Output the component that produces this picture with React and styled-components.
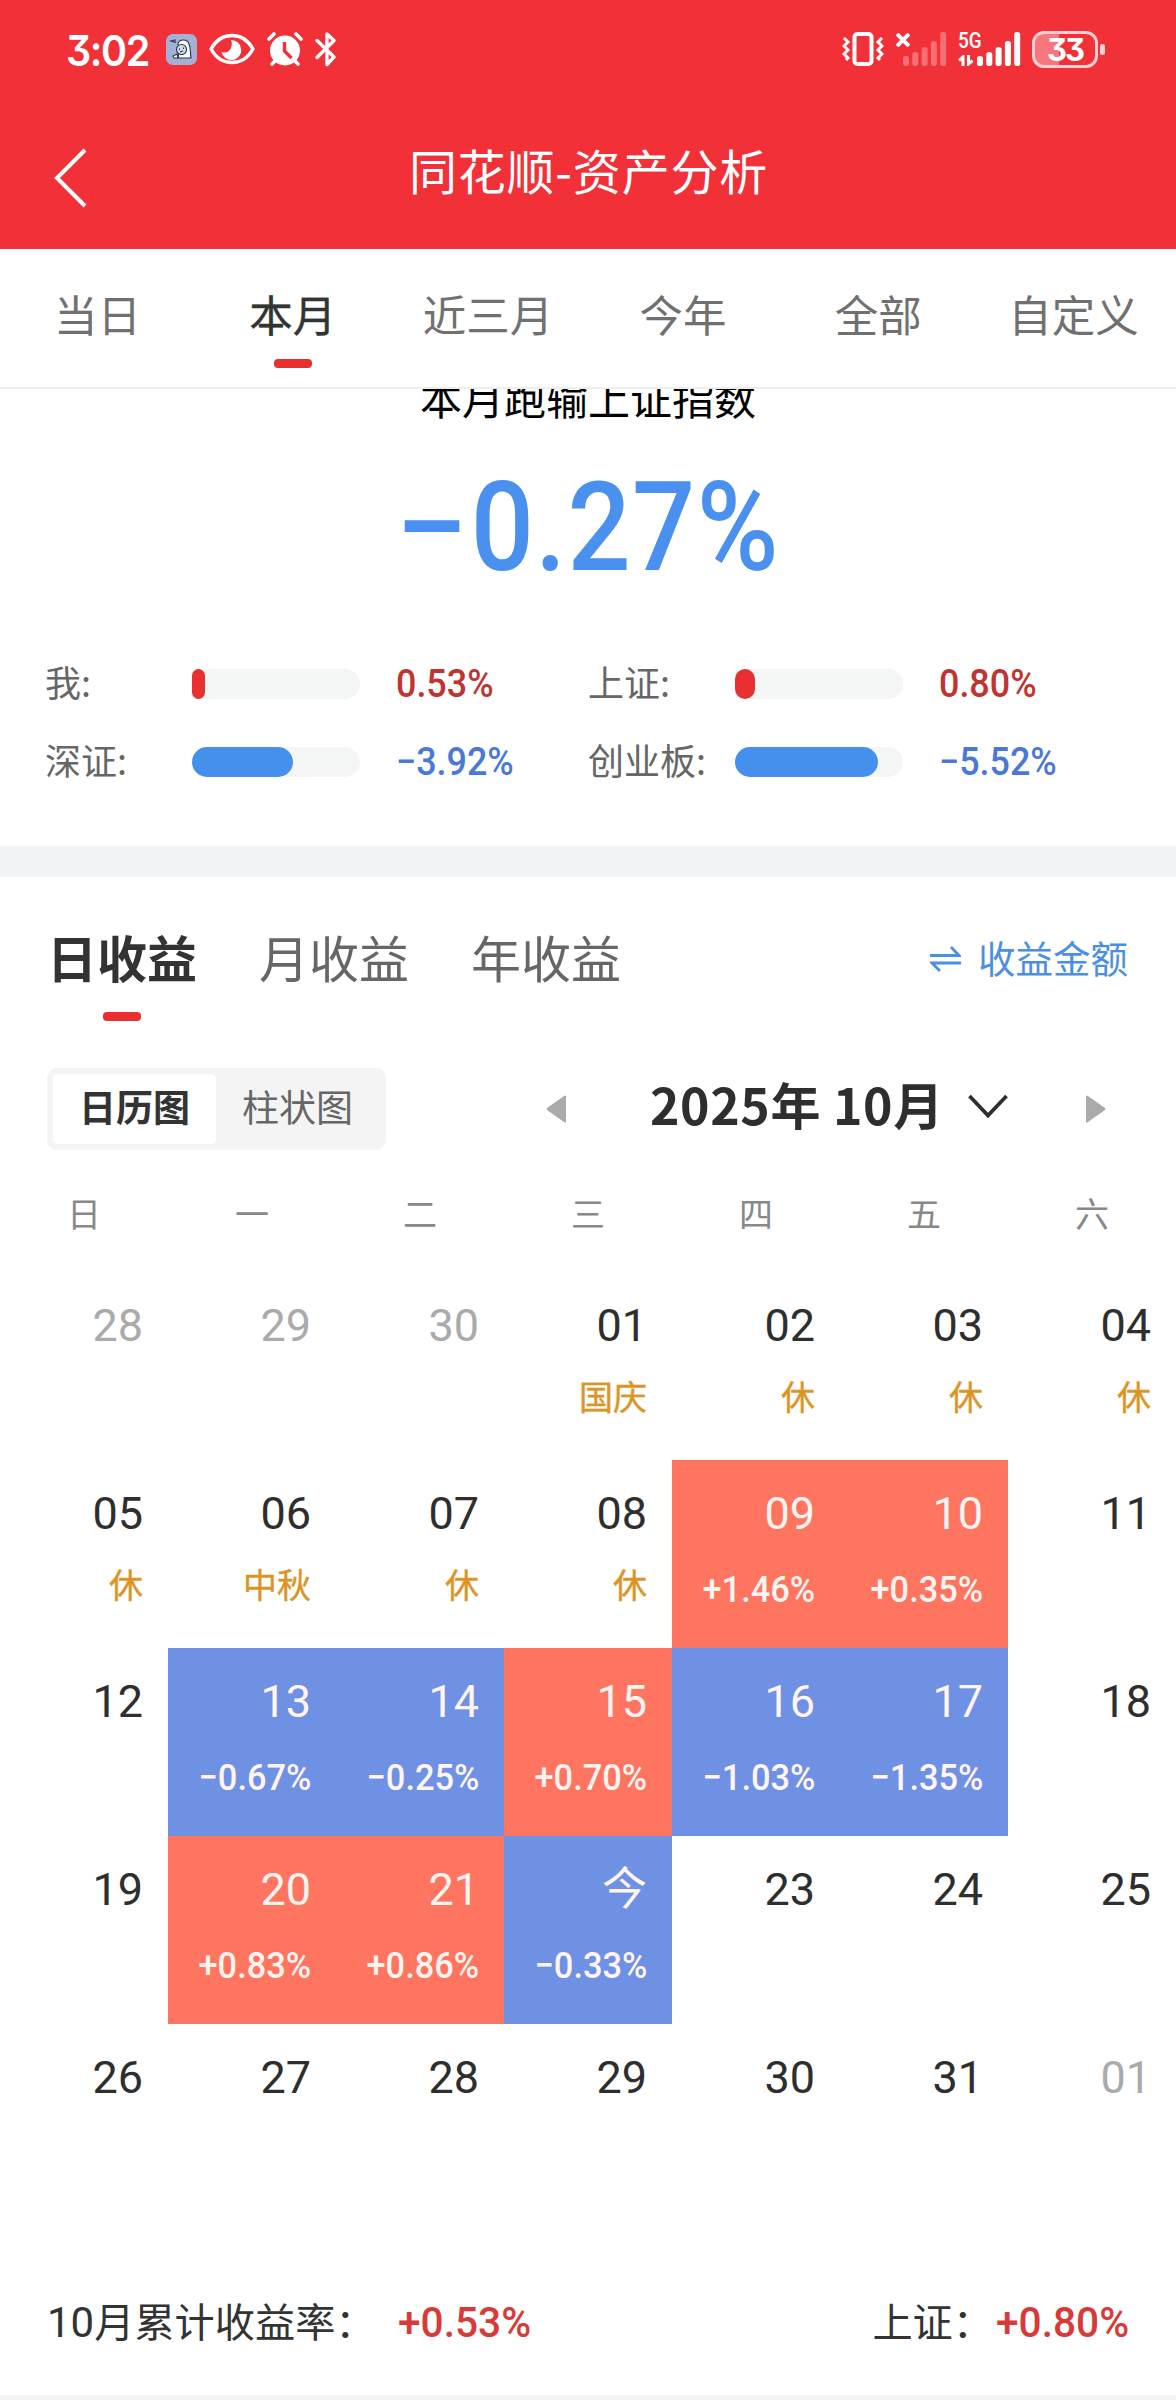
import React from "react";
import styled, { createGlobalStyle } from "styled-components";

const periods = ["当日", "本月", "近三月", "今年", "全部", "自定义"];

const indexes = [
  { label: "我:", value: "0.53%", size: 13, up: true },
  { label: "上证:", value: "0.80%", size: 20, up: true },
  { label: "深证:", value: "−3.92%", size: 101 },
  { label: "创业板:", value: "−5.52%", size: 143 },
];

const weekDays = ["日", "一", "二", "三", "四", "五", "六"];

const days = [
  { day: "28", out: true },
  { day: "29", out: true },
  { day: "30", out: true },
  { day: "01", rest: "国庆" },
  { day: "02", rest: "休" },
  { day: "03", rest: "休" },
  { day: "04", rest: "休" },
  { day: "05", rest: "休" },
  { day: "06", rest: "中秋" },
  { day: "07", rest: "休" },
  { day: "08", rest: "休" },
  { day: "09", rate: "+1.46%" },
  { day: "10", rate: "+0.35%" },
  { day: "11" },
  { day: "12" },
  { day: "13", rate: "−0.67%" },
  { day: "14", rate: "−0.25%" },
  { day: "15", rate: "+0.70%" },
  { day: "16", rate: "−1.03%" },
  { day: "17", rate: "−1.35%" },
  { day: "18" },
  { day: "19" },
  { day: "20", rate: "+0.83%" },
  { day: "21", rate: "+0.86%" },
  { day: "今", rate: "−0.33%" },
  { day: "23" },
  { day: "24" },
  { day: "25" },
  { day: "26" },
  { day: "27" },
  { day: "28" },
  { day: "29" },
  { day: "30" },
  { day: "31" },
  { day: "01", out: true },
];

const barTops = [24, 20, 15, 9, 0];

function SignalBars({ faded }) {
  return (
    <svg width="44" height="34" viewBox="0 0 44 34" fill="#fff" opacity={faded ? 0.3 : 1}>
      {barTops.map((top, i) => (
        <rect key={top} x={i * 9.3} y={top} width="6" height={34 - top} rx="2.8" />
      ))}
    </svg>
  );
}

function StatusIcons() {
  return (
    <>
      <AppBadge>
        <svg width="31" height="31" viewBox="0 0 31 31" fill="#fff" stroke="#28324a" strokeWidth="1.1">
          <path d="M12 11c0-6 9-7 11-1 2 5 1 9 2 14H12l1-6" />
          <circle cx="15.500" cy="15.500" r="5" fill="#d5dced" />
          <path d="M13.500 14.500v1.500M17.500 13.500v1.500M14 18l3-1M7 22l4-2 1 4H8zM5 7l4-1v2.500z" />
        </svg>
      </AppBadge>
      <Eye width="46" height="32" viewBox="0 0 46 32">
        <path d="M2 16C12-2 34-2 44 16 34 34 12 34 2 16z" fill="none" stroke="#fff" strokeWidth="3.4" strokeLinejoin="round" />
        <path d="M22 7a10 10 0 1 1-9.500 12q6 2 9-3 2.500-5 .5-9z" fill="#fff" />
      </Eye>
      <Alarm width="36" height="35" viewBox="0 0 36 35">
        <circle cx="18" cy="18.500" r="15" fill="#fff" />
        <path d="M2 7l5-5M34 7l-5-5M5 32l4-4M31 32l-4-4" stroke="#fff" strokeWidth="3.600" strokeLinecap="round" />
        <path d="M17.500 10v9l7 7" fill="none" stroke="#f23038" strokeWidth="3.400" />
      </Alarm>
      <Bluetooth width="22" height="36" viewBox="0 0 22 36" fill="none" stroke="#fff" strokeWidth="3.400" strokeLinejoin="round" strokeLinecap="round">
        <path d="M2 9.500l17 16.500-7 7.500V3l7 6.500L2 26.500" />
      </Bluetooth>
    </>
  );
}

export default function App() {
  return (
    <Page>
      <GlobalStyle />
      <StatusBar>
        <Clock>3:02</Clock>
        <StatusIcons />
        <StatusRight>
          <Vibrate width="42" height="34" viewBox="0 0 42 34" fill="none" stroke="#fff">
            <rect x="12.500" y="2" width="17" height="30" rx="3" strokeWidth="4" />
            <path d="M2 6l4 4-4 4 4 4-4 4 4 4-2 2M40 6l-4 4 4 4-4 4 4 4-4 4 2 2" strokeWidth="3" />
          </Vibrate>
          <Sim>
            <NoSim width="14" height="14" viewBox="0 0 14 14" stroke="#fff" strokeWidth="4">
              <path d="M1 1l12 12M13 1L1 13" />
            </NoSim>
            <SignalBars faded />
          </Sim>
          <Sim>
            <Network>
              <span>5G</span>
              <svg width="16" height="11" viewBox="0 0 16 11" fill="none" stroke="#fff" strokeWidth="3">
                <path d="M5 11V2L1 5.500M10.500 0v9l4-3.500" />
              </svg>
            </Network>
            <SignalBars />
          </Sim>
          <Battery>33</Battery>
          <BatteryTip />
        </StatusRight>
      </StatusBar>

      <NavBar>
        <svg width="33" height="60" viewBox="0 0 33 60" fill="none" stroke="#fff" strokeWidth="4">
          <path d="M31 2L3 30l28 28" />
        </svg>
        <h1>同花顺-资产分析</h1>
      </NavBar>

      <Periods>
        {periods.map((name, i) => (
          <Period key={name} $active={i === 1}>{name}</Period>
        ))}
      </Periods>

      <Summary>
        <SummaryTitle>本月跑输上证指数</SummaryTitle>
        <BigRate><Sign>−</Sign>0.27%</BigRate>
        <IndexGrid>
          {indexes.map((item) => (
            <IndexRow key={item.label}>
              <IndexLabel>{item.label}</IndexLabel>
              <Track>
                <Fill $up={item.up} style={{ width: item.size }} />
              </Track>
              <IndexValue $up={item.up}>{item.value}</IndexValue>
            </IndexRow>
          ))}
        </IndexGrid>
      </Summary>

      <ProfitTabs>
        <ProfitTab $active>日收益</ProfitTab>
        <ProfitTab>月收益</ProfitTab>
        <ProfitTab>年收益</ProfitTab>
        <Switcher>
          <svg width="31" height="26" viewBox="0 0 31 26" fill="none" stroke="#4a90e2" strokeWidth="2.800">
            <path d="M0 9.500h29L21 1M31 17H2l8 8" />
          </svg>
          收益金额
        </Switcher>
      </ProfitTabs>

      <Controls>
        <Segment>
          <SegmentItem $active>日历图</SegmentItem>
          <SegmentItem>柱状图</SegmentItem>
        </Segment>
        <PrevMonth width="21" height="28" viewBox="0 0 21 28" fill="#aaa">
          <path d="M20 1v26q-1 1-2 0L1 15q-1-1 0-2L18 1q1-1 2 0z" />
        </PrevMonth>
        <Month>2025年 10月</Month>
        <MonthArrow width="40" height="25" viewBox="0 0 40 25" fill="none" stroke="#2e2e2e" strokeWidth="3.800">
          <path d="M1.500 2L20 21.500 38.500 2" />
        </MonthArrow>
        <NextMonth width="21" height="28" viewBox="0 0 21 28" fill="#aaa">
          <path d="M1 1v26q1 1 2 0l17-12q1-1 0-2L3 1Q2 0 1 1z" />
        </NextMonth>
      </Controls>

      <WeekHeader>
        {weekDays.map((name) => (
          <span key={name}>{name}</span>
        ))}
      </WeekHeader>

      <Calendar>
        {days.map((item, i) => (
          <Day key={i} $rate={item.rate}>
            <DayNumber $out={item.out}>{item.day}</DayNumber>
            {item.rest && <Rest>{item.rest}</Rest>}
            {item.rate && <DayRate>{item.rate}</DayRate>}
          </Day>
        ))}
      </Calendar>

      <Totals>
        <TotalLabel><Digits>10</Digits>月累计收益率：</TotalLabel>
        <TotalRate $gap={22}>+0.53%</TotalRate>
        <TotalLabel $right>上证：</TotalLabel>
        <TotalRate $gap={3}>+0.80%</TotalRate>
      </Totals>
    </Page>
  );
}

const GlobalStyle = createGlobalStyle`
  * {
    box-sizing: border-box;
  }

  body {
    margin: 0;
    background: #f2f3f6;
    font-family: "Noto Sans CJK SC", sans-serif;
  }

  svg {
    display: block;
    flex-shrink: 0;
  }
`

const Page = styled.div`
  width: 1176px;
  height: 2400px;
  overflow: hidden;
  white-space: nowrap;
`

const StatusBar = styled.div`
  height: 98px;
  padding: 0 71px 0 66px;
  display: flex;
  align-items: center;
  background: #f23038;
  color: #ffffff;
`

const Clock = styled.div`
  width: 100px;
  font: 600 43px/98px Inter, sans-serif;
  font-feature-settings: "cv09";
  letter-spacing: -1.5px;
  transform: scaleX(0.92);
  transform-origin: left;
  margin-top: 2px;
`

const AppBadge = styled.div`
  width: 31px;
  height: 31px;
  border-radius: 7px;
  background: #a3b1d6;
`

const Eye = styled.svg`
  margin-left: 12px;
`

const Alarm = styled.svg`
  margin-left: 12px;
`

const Bluetooth = styled.svg`
  margin-left: 12px;
`

const StatusRight = styled.div`
  margin-left: auto;
  display: flex;
  align-items: center;
`

const Vibrate = styled.svg`
  margin-right: 12px;
`

const Sim = styled.div`
  height: 34px;
  display: flex;
  margin-right: 11px;
`

const NoSim = styled.svg`
  margin: 1px -7px 0 0;
`

const Network = styled.div`
  width: 19px;
  display: flex;
  flex-direction: column;
  justify-content: space-between;

  span {
    font: 500 22px/18px Roboto, sans-serif;
    transform: scaleX(0.86);
    transform-origin: left;
  }
`

const Battery = styled.div`
  width: 66px;
  height: 37px;
  border: 3px solid #ffd0d2;
  border-radius: 12px;
  background: linear-gradient(90deg, #f8777c 24px, transparent 24px);
  text-align: center;
  font: 700 31px/31px Inter, sans-serif;
  font-feature-settings: "cv09";
  letter-spacing: -2px;
`

const BatteryTip = styled.div`
  width: 5px;
  height: 11px;
  margin-left: 2px;
  margin-right: 0;
  border-radius: 2px;
  background: #ffd0d2;
`

const NavBar = styled.div`
  height: 151px;
  padding: 0 54px;
  display: flex;
  align-items: center;
  background: #f23038;
  color: #ffffff;

  svg {
    margin-top: 8px;
  }

  h1 {
    flex: 1;
    margin: 0 32px 10px 0;
    text-align: center;
    font-size: 48px;
    font-weight: 400;
    line-height: 60px;
    letter-spacing: 0.8px;
  }
`

const Periods = styled.div`
  height: 140px;
  padding-right: 5px;
  display: grid;
  grid-template-columns: repeat(6, 1fr);
  background: #ffffff;
  border-bottom: 2px solid #eeeeee;
`

const Period = styled.div`
  padding-top: 37px;
  display: flex;
  flex-direction: column;
  align-items: center;
  font-size: 43.5px;
  line-height: 56px;
  color: ${(props) => (props.$active ? "#333333" : "#707070")};
  -webkit-text-stroke: ${(props) => (props.$active ? "0.4px #333333" : "0")};

  &::after {
    content: "";
    display: ${(props) => (props.$active ? "block" : "none")};
    width: 38px;
    height: 9px;
    margin-top: 17px;
    border-radius: 4px;
    background: #e83030;
  }
`

const Summary = styled.div`
  height: 457px;
  overflow: hidden;
  background: #ffffff;
`

/* partly scrolled under the period tabs */
const SummaryTitle = styled.div`
  margin-top: -22px;
  text-align: center;
  font-size: 42px;
  line-height: 60px;
  color: #000000;
`

const BigRate = styled.div`
  margin-top: 41px;
  padding-left: 12px;
  text-align: center;
  font: 500 125px/120px Roboto, sans-serif;
  letter-spacing: 1.5px;
  color: #4a90ee;
  transform: scaleX(0.89);
`

const Sign = styled.span`
  display: inline-block;
  transform: scaleX(1.18);
  transform-origin: right;
`

const IndexGrid = styled.div`
  margin-top: 72px;
  padding-left: 45px;
  display: grid;
  grid-template-columns: 543px 1fr;
  row-gap: 30px;
`

const IndexRow = styled.div`
  height: 48px;
  display: flex;
  align-items: center;
`

const IndexLabel = styled.div`
  width: 147px;
  padding-bottom: 7px;
  font-size: 36px;
  line-height: 48px;
  color: #666666;
`

const Track = styled.div`
  width: 168px;
  height: 30px;
  border-radius: 15px;
  background: #f4f6f6;
`

const Fill = styled.div`
  height: 30px;
  border-radius: 15px;
  background: ${(props) => (props.$up ? "#e83030" : "#4690ed")};
`

const IndexValue = styled.div`
  margin-left: 36px;
  font: 500 39px/48px Roboto, sans-serif;
  color: ${(props) => (props.$up ? "#c0332e" : "#4a78d8")};
  transform: scaleX(0.92);
  transform-origin: left;
`

const ProfitTabs = styled.div`
  height: 174px;
  margin-top: 31px;
  padding: 48px 48px 0 47px;
  display: flex;
  background: #ffffff;
`

const ProfitTab = styled.div`
  margin-right: 62px;
  display: flex;
  flex-direction: column;
  align-items: center;
  font-size: 50px;
  font-weight: ${(props) => (props.$active ? 700 : 400)};
  line-height: 62px;
  color: ${(props) => (props.$active ? "#333333" : "#666666")};

  &::after {
    content: "";
    display: ${(props) => (props.$active ? "block" : "none")};
    width: 38px;
    height: 9px;
    margin-top: 25px;
    border-radius: 4px;
    background: #e83030;
  }
`

const Switcher = styled.div`
  height: 62px;
  margin-left: auto;
  display: flex;
  align-items: center;
  gap: 17px;
  font-size: 37.5px;
  color: #4a90e2;

  svg {
    margin-top: 6px;
  }
`

const Controls = styled.div`
  height: 116px;
  padding: 17px 70px 17px 47px;
  display: flex;
  align-items: center;
  background: #ffffff;
`

const Segment = styled.div`
  width: 339px;
  height: 82px;
  padding: 6px;
  display: flex;
  border-radius: 10px;
  background: #f4f4f4;
`

const SegmentItem = styled.div`
  width: 163px;
  height: 70px;
  border-radius: 5px;
  background: ${(props) => (props.$active ? "#ffffff" : "none")};
  text-align: center;
  font-size: 37px;
  font-weight: ${(props) => (props.$active ? 700 : 400)};
  line-height: 64px;
  color: ${(props) => (props.$active ? "#333333" : "#666666")};
`

const PrevMonth = styled.svg`
  margin-left: 160px;
`

const Month = styled.div`
  width: 318px;
  margin-left: 83px;
  padding-bottom: 12px;
  font-size: 50px;
  font-weight: 700;
  line-height: 60px;
  letter-spacing: 0.6px;
  color: #2e2e2e;
`

const MonthArrow = styled.svg`
  margin-top: -6px;
`

const NextMonth = styled.svg`
  margin-left: auto;
`

const WeekHeader = styled.div`
  height: 105px;
  padding-top: 22px;
  display: grid;
  grid-template-columns: repeat(7, 168px);
  background: #ffffff;
  text-align: center;
  font-size: 34px;
  line-height: 48px;
  color: #888888;
`

const Calendar = styled.div`
  display: grid;
  grid-template-columns: repeat(7, 168px);
  grid-auto-rows: 188px;
  background: #ffffff;
`

const cellColor = (rate) => {
  if (!rate) return "#ffffff"
  return rate[0] === "+" ? "#ff755f" : "#6e91e4"
}

const Day = styled.div`
  padding: 28px 25px 0 0;
  display: flex;
  flex-direction: column;
  align-items: flex-end;
  background: ${(props) => cellColor(props.$rate)};
  color: ${(props) => (props.$rate ? "#fff4f2" : "#2e2e2e")};
`

const DayNumber = styled.div`
  height: 52px;
  font: 400 45px/52px Roboto, "Noto Sans CJK SC", sans-serif;
  color: ${(props) => (props.$out ? "#aaaaaa" : "inherit")};
`

const Rest = styled.div`
  margin-top: 20px;
  font-size: 34px;
  line-height: 48px;
  color: #db9526;
  -webkit-text-stroke: 0.4px #db9526;
`

const DayRate = styled.div`
  margin-top: 26px;
  font: 500 37px/48px Roboto, sans-serif;
  transform: scaleX(0.93);
  transform-origin: right;
`

const Totals = styled.div`
  height: 183px;
  padding: 80px 47px 0;
  display: flex;
  background: #ffffff;
`

const TotalLabel = styled.div`
  margin-left: ${(props) => (props.$right ? "auto" : "0")};
  font-size: 40.2px;
  line-height: 56px;
  color: #333333;
`

const Digits = styled.span`
  font: 400 42px Roboto, sans-serif;
`

const TotalRate = styled.div`
  width: 133px;
  margin-left: ${(props) => props.$gap}px;
  font: 500 43px/60px Roboto, sans-serif;
  color: #d83a38;
  transform: scaleX(0.945);
  transform-origin: left;
`
